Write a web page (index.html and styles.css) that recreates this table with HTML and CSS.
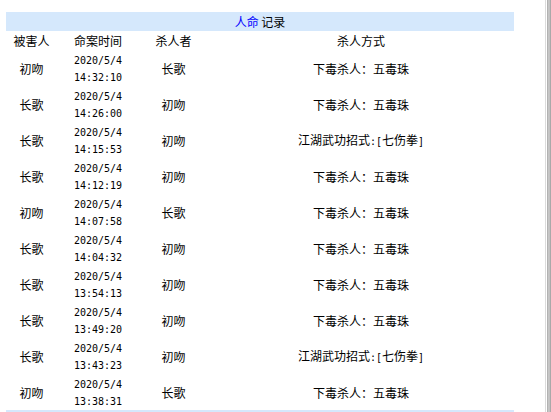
FILE: index.html
```html
<!DOCTYPE html>
<html lang="zh">
<head>
<meta charset="utf-8">
<title>人命记录</title>
<link rel="stylesheet" href="styles.css">
</head>
<body>
<div class="frame"><div class="frame-light"></div><div class="frame-dark"></div></div>
<table class="log">
  <colgroup>
    <col class="c1"><col class="c2"><col class="c3"><col class="c4">
  </colgroup>
  <thead>
    <tr class="title"><th colspan="4"><span class="blue">人命</span> 记录</th></tr>
    <tr class="heads"><th>被害人</th><th>命案时间</th><th>杀人者</th><th>杀人方式</th></tr>
  </thead>
  <tbody>
    <tr><td>初吻</td><td><span class="mono">2020/5/4<br>14:32:10</span></td><td>长歌</td><td>下毒杀人：五毒珠</td></tr>
    <tr><td>长歌</td><td><span class="mono">2020/5/4<br>14:26:00</span></td><td>初吻</td><td>下毒杀人：五毒珠</td></tr>
    <tr><td>长歌</td><td><span class="mono">2020/5/4<br>14:15:53</span></td><td>初吻</td><td>江湖武功招式<span class="half">:[</span>七伤拳<span class="half">]</span></td></tr>
    <tr><td>长歌</td><td><span class="mono">2020/5/4<br>14:12:19</span></td><td>初吻</td><td>下毒杀人：五毒珠</td></tr>
    <tr><td>初吻</td><td><span class="mono">2020/5/4<br>14:07:58</span></td><td>长歌</td><td>下毒杀人：五毒珠</td></tr>
    <tr><td>长歌</td><td><span class="mono">2020/5/4<br>14:04:32</span></td><td>初吻</td><td>下毒杀人：五毒珠</td></tr>
    <tr><td>长歌</td><td><span class="mono">2020/5/4<br>13:54:13</span></td><td>初吻</td><td>下毒杀人：五毒珠</td></tr>
    <tr><td>长歌</td><td><span class="mono">2020/5/4<br>13:49:20</span></td><td>初吻</td><td>下毒杀人：五毒珠</td></tr>
    <tr><td>长歌</td><td><span class="mono">2020/5/4<br>13:43:23</span></td><td>初吻</td><td>江湖武功招式<span class="half">:[</span>七伤拳<span class="half">]</span></td></tr>
    <tr><td>初吻</td><td><span class="mono">2020/5/4<br>13:38:31</span></td><td>长歌</td><td>下毒杀人：五毒珠</td></tr>
  </tbody>
  <tfoot>
    <tr class="foot"><td colspan="4"></td></tr>
  </tfoot>
</table>
</body>
</html>
```
FILE: styles.css
```css
html, body {
  margin: 0;
  padding: 0;
  background: #ffffff;
  overflow: hidden;
}
body {
  padding: 12px 0 0 6px;
  font-family: "Noto Sans CJK SC", "Noto Sans", sans-serif;
  font-size: 12px;
  color: #000000;
}
.log {
  border-collapse: collapse;
  table-layout: fixed;
  width: 508px;
}
.c1 { width: 51px; }
.c2 { width: 82px; }
.c3 { width: 69px; }
.c4 { width: 306px; }
.log th, .log td {
  padding: 0;
  text-align: center;
  vertical-align: middle;
  font-weight: normal;
  line-height: 17px;
}
.title th {
  background: #d5e8fc;
  height: 19px;
}
.blue { color: #0000ff; }
.heads th { height: 19px; }
.log tbody td { height: 36px; }
.mono {
  display: inline-block;
  font-family: "DejaVu Sans Mono", "Liberation Mono", monospace;
  font-size: 10px;
  line-height: 17px;
  padding-top: 1px;
}
.half {
  font-family: "DejaVu Sans Mono", monospace;
  font-size: 10px;
}
.foot td {
  background: #d5e8fc;
  height: 19px;
}
.frame {
  position: fixed;
  top: 0;
  right: 0;
  width: 6px;
  height: 100%;
  display: flex;
}
.frame-light {
  width: 1px;
  background: #dcdcdc;
}
.frame-dark {
  margin-left: 1px;
  flex: 1;
  background: linear-gradient(to right, #a8a8a8, #d0d0d0, #9c9c9c);
}
```
